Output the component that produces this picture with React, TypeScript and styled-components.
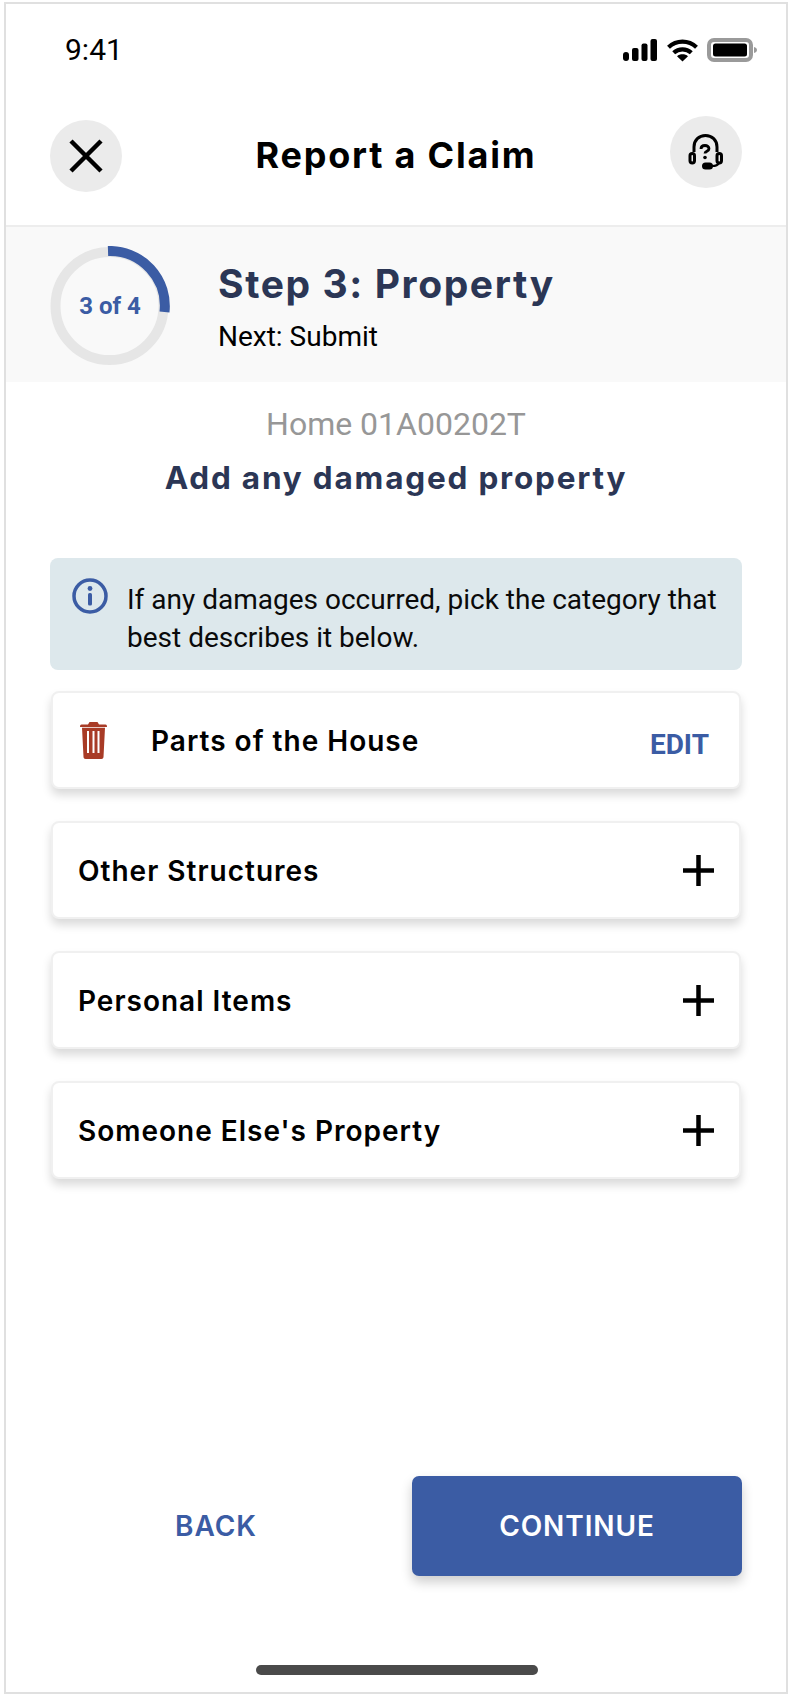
import React from "react";
import styled, { createGlobalStyle } from "styled-components";

const Global = createGlobalStyle`
  html, body { margin: 0; padding: 0; background: #fff; }
  #root { width: 788px; height: 1694px; overflow: hidden; }
  * { box-sizing: border-box; }
`;

const HEAD = `"Inter", "Open Sans", sans-serif`;
const BODY = `"Roboto", "Liberation Sans", sans-serif`;
const BLUE = "#3b5ca4";
const NAVY = "#2b3655";

const Page = styled.div`
  width: 788px;
  height: 1694px;
  padding: 2px 0 0 4px;
`;
const Frame = styled.div`
  width: 784px;
  height: 1692px;
  border: 2px solid #e0e0e0;
  display: flex;
  flex-direction: column;
  background: #fff;
`;
const StatusBar = styled.div`
  height: 64px;
  padding: 30px 29px 0 59px;
  display: flex;
  justify-content: space-between;
  align-items: center;
`;
const Time = styled.div`
  font: 400 30px/32px ${BODY};
  color: #000;
  margin-top: -2px;
`;
const StatusIcons = styled.div`
  display: flex;
  align-items: center;
  gap: 9px;
  margin-top: -2px;
`;
const Header = styled.div`
  height: 159px;
  padding: 0 44px 0 44px;
  display: flex;
  justify-content: space-between;
  align-items: flex-start;
  border-bottom: 2px solid #ededed;
`;
const RoundButton = styled.div<{ $top: number }>`
  width: 72px;
  height: 72px;
  border-radius: 50%;
  background: #ebebeb;
  display: flex;
  align-items: center;
  justify-content: center;
  margin-top: ${(p) => p.$top}px;
`;
const Title = styled.div`
  font: 700 36px/40px ${HEAD};
  letter-spacing: 1.8px;
  color: #000;
  margin-top: 67px;
`;
const StepBand = styled.div`
  height: 155px;
  background: #f9f9f9;
  padding: 19px 0 0 44px;
  display: flex;
  align-items: flex-start;
  gap: 48px;
`;
const Ring = styled.div`
  width: 120px;
  height: 120px;
  display: grid;
  place-items: center;
  > * {
    grid-area: 1 / 1;
  }
`;
const RingLabel = styled.div`
  font: 700 24px/28px ${BODY};
  color: ${BLUE};
`;
const StepText = styled.div`
  display: flex;
  flex-direction: column;
  padding-top: 15px;
`;
const StepTitle = styled.div`
  font: 700 39px/46px ${HEAD};
  letter-spacing: 1.6px;
  color: ${NAVY};
`;
const StepNext = styled.div`
  font: 400 28px/32px ${BODY};
  color: #000;
  margin-top: 14px;
`;
const Intro = styled.div`
  text-align: center;
  padding-top: 24px;
`;
const PolicyId = styled.div`
  font: 400 32px/36px ${BODY};
  color: #979797;
`;
const Prompt = styled.div`
  font: 700 31.5px/38px ${HEAD};
  letter-spacing: 1.8px;
  color: ${NAVY};
  margin-top: 17px;
`;
const Body = styled.div`
  padding: 0 44px 0 44px;
  margin-top: 61px;
  display: flex;
  flex-direction: column;
`;
const InfoBox = styled.div`
  height: 112px;
  background: #dde8ec;
  border-radius: 8px;
  padding: 20px 0 0 22px;
  display: flex;
  gap: 19px;
`;
const InfoText = styled.div`
  font: 400 28px/38px ${BODY};
  color: #0a0a0a;
  margin-top: 3px;
  width: 610px;
`;
const Cards = styled.div`
  margin-top: 21px;
  display: flex;
  flex-direction: column;
  gap: 32px;
  padding: 0 1px;
`;
const Card = styled.div`
  height: 98px;
  background: #fff;
  border: 2px solid #f0f0f0;
  border-radius: 8px;
  box-shadow: 0 6px 10px rgba(0, 0, 0, 0.15);
  display: flex;
  align-items: center;
  padding: 0 25px 0 25px;
`;
const CardLabel = styled.div<{ $indent?: number }>`
  font: 600 28px/34px ${HEAD};
  letter-spacing: 1px;
  color: #000;
  flex: 1;
  margin-top: 2px;
  margin-left: ${(p) => p.$indent ?? 0}px;
`;
const EditLink = styled.div`
  font: 700 28px/32px ${BODY};
  color: ${BLUE};
  margin-right: 5px;
  margin-top: 10px;
`;
const TrashSlot = styled.div`
  display: flex;
  margin-left: 2px;
`;
const Footer = styled.div`
  margin-top: auto;
  padding: 0 44px 0 0;
  display: flex;
  align-items: center;
  justify-content: flex-end;
`;
const BackLink = styled.div`
  flex: 1;
  text-align: center;
  padding-left: 14px;
  font: 600 28px/32px ${HEAD};
  letter-spacing: 1px;
  color: ${BLUE};
`;
const ContinueButton = styled.div`
  width: 330px;
  height: 100px;
  background: ${BLUE};
  border-radius: 7px;
  box-shadow: 0 6px 12px rgba(0, 0, 0, 0.2);
  display: flex;
  align-items: center;
  justify-content: center;
  font: 600 28px/32px ${HEAD};
  letter-spacing: 0.9px;
  color: #fff;
`;
const HomeBar = styled.div`
  width: 282px;
  height: 10px;
  border-radius: 5px;
  background: #4a4a4a;
  margin: 89px auto 17px 250px;
`;

const Plus = () => (
  <svg width="31" height="31" viewBox="0 0 31 31" fill="none" stroke="#000" strokeWidth="4.5">
    <path d="M15.5 0v31M0 15.5h31" />
  </svg>
);

const Trash = () => (
  <svg width="27" height="37" viewBox="0 0 27 37">
    <path fill="#a83b26" d="M9.500 0h8l1.500 2.500h6.500c1 0 1.500.8 1.500 2.500H0c0-1.700.5-2.500 1.500-2.500H8z" />
    <path
      fill="#a83b26"
      fillRule="evenodd"
      d="M2 5.800h23l-1.500 29.200c-.1 1.200-.9 2-2 2h-16c-1.100 0-1.900-.8-2-2zM7 9v22h2V9zM12.500 9v22h2V9zM17.500 9v22h2V9z"
    />
  </svg>
);

export default function App() {
  return (
    <>
      <Global />
      <Page>
        <Frame>
          <StatusBar>
            <Time>9:41</Time>
            <StatusIcons>
              <svg width="35" height="22" viewBox="0 0 35 22" fill="#000">
                <rect x="0" y="13" width="6" height="9" rx="3" />
                <rect x="9" y="9" width="6.500" height="13" rx="2" />
                <rect x="18.500" y="4.500" width="6" height="17.500" rx="2" />
                <rect x="27.500" y="0" width="6.500" height="22" rx="2" />
              </svg>
              <svg width="31" height="23" viewBox="0 0 31 23" fill="none" stroke="#000" strokeWidth="4.200">
                <path d="M1.500 8.200C9.500.8 21.500.8 29.500 8.200" />
                <path d="M6.700 13.800c5-4.700 12.600-4.700 17.600 0" />
                <path d="M15.500 22.500l-5.500-5.300c3-2.600 8-2.600 11 0z" fill="#000" stroke="none" />
              </svg>
              <svg width="50" height="24" viewBox="0 0 50 24">
                <rect x="2" y="2" width="42" height="20" rx="5" fill="#fff" stroke="#9a9a9a" strokeWidth="4" />
                <rect x="6" y="5.500" width="34" height="13" rx="2.500" fill="#000" />
                <path d="M47 9c1.700.4 3 1.500 3 3s-1.300 2.600-3 3z" fill="#9a9a9a" />
              </svg>
            </StatusIcons>
          </StatusBar>
          <Header>
            <RoundButton $top={52}>
              <svg width="34" height="34" viewBox="0 0 34 34" fill="none" stroke="#000" strokeWidth="4.500">
                <path d="M2 2l30 30M32 2L2 32" />
              </svg>
            </RoundButton>
            <Title>Report a Claim</Title>
            <RoundButton $top={48}>
              <svg width="36" height="36" viewBox="0 0 36 36" fill="none">
                <path d="M6 18v-5C6 6 11 1.500 17.500 1.500S29 6 29 13v5" stroke="#000" strokeWidth="3" />
                <rect x="2" y="19.500" width="4.500" height="9.500" rx="2.200" stroke="#000" strokeWidth="3" />
                <rect x="29" y="19.500" width="4.500" height="9.500" rx="2.200" stroke="#000" strokeWidth="3" />
                <path d="M24 32c3.500 0 6-.8 7-3" stroke="#000" strokeWidth="2.200" />
                <rect x="14" y="28.500" width="11" height="7" rx="3.500" fill="#000" />
                <path d="M13 15c0-2.200 1.800-3.500 4-3.500s4 1.300 4 3.300c0 2.600-4 2.400-4 4.700" stroke="#000" strokeWidth="2.800" />
                <circle cx="17" cy="23.500" r="1.800" fill="#000" />
              </svg>
            </RoundButton>
          </Header>
          <StepBand>
            <Ring>
              <svg width="120" height="120" viewBox="0 0 120 120" fill="none" strokeWidth="10">
                <circle cx="59.500" cy="60" r="54" stroke="#e6e6e6" />
                <path d="M58 5A55 55 0 0 1 114.500 66" stroke={BLUE} />
              </svg>
              <RingLabel>3 of 4</RingLabel>
            </Ring>
            <StepText>
              <StepTitle>Step 3: Property</StepTitle>
              <StepNext>Next: Submit</StepNext>
            </StepText>
          </StepBand>
          <Intro>
            <PolicyId>Home 01A00202T</PolicyId>
            <Prompt>Add any damaged property</Prompt>
          </Intro>
          <Body>
            <InfoBox>
              <svg width="36" height="36" viewBox="0 0 36 36" fill="none">
                <circle cx="18" cy="18" r="16" stroke={BLUE} strokeWidth="3.500" />
                <circle cx="18" cy="10.500" r="2.400" fill={BLUE} />
                <rect x="16" y="15" width="4" height="12.500" rx="1.600" fill={BLUE} />
              </svg>
              <InfoText>If any damages occurred, pick the category that best describes it below.</InfoText>
            </InfoBox>
            <Cards>
              <Card>
                <TrashSlot>
                  <Trash />
                </TrashSlot>
                <CardLabel $indent={44}>Parts of the House</CardLabel>
                <EditLink>EDIT</EditLink>
              </Card>
              <Card>
                <CardLabel>Other Structures</CardLabel>
                <Plus />
              </Card>
              <Card>
                <CardLabel>Personal Items</CardLabel>
                <Plus />
              </Card>
              <Card>
                <CardLabel>Someone Else's Property</CardLabel>
                <Plus />
              </Card>
            </Cards>
          </Body>
          <Footer>
            <BackLink>BACK</BackLink>
            <ContinueButton>CONTINUE</ContinueButton>
          </Footer>
          <HomeBar />
        </Frame>
      </Page>
    </>
  );
}
